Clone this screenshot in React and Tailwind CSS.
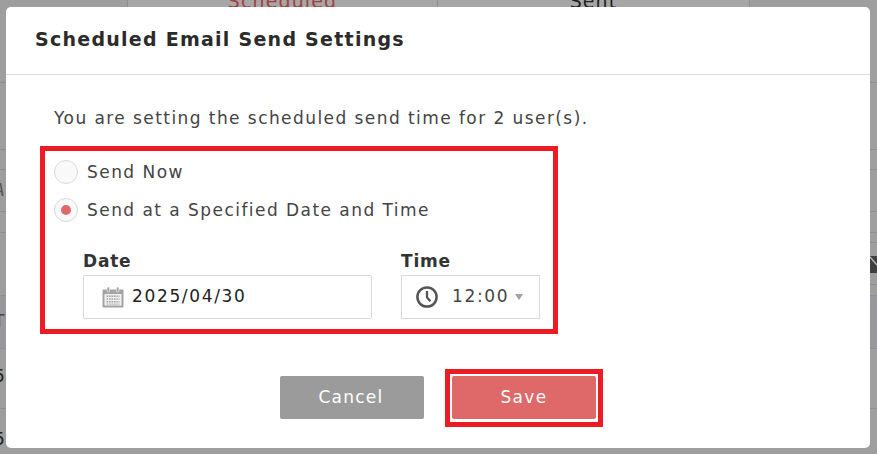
import React from "react";

function CalendarIcon() {
  return (
    <svg width="22" height="22" viewBox="0 0 22 22" className="shrink-0">
      <path d="M0.5 4.5a1 1 0 0 1 1-1h19a1 1 0 0 1 1 1v16a1 1 0 0 1-1 1h-19a1 1 0 0 1-1-1z" fill="#a3a3a3" />
      <rect x="2.5" y="8" width="17" height="11.5" fill="#f2f2f2" />
      <rect x="5" y="1" width="2.6" height="5" rx="1.2" fill="#a3a3a3" stroke="#fff" strokeWidth="0.6" />
      <rect x="14.4" y="1" width="2.6" height="5" rx="1.2" fill="#a3a3a3" stroke="#fff" strokeWidth="0.6" />
      <path d="M4.5 9.5h13v1.6h-13zM4.5 12.2h13v1.6h-13zM4.5 14.9h13v1.6h-13zM4.5 17.4h13v1.2h-13z" fill="#a3a3a3" />
      <path d="M6.5 9.5v9M9 9.5v9M11.5 9.5v9M14 9.5v9M16.3 9.5v9" stroke="#f2f2f2" strokeWidth="0.8" />
    </svg>
  );
}

function ClockIcon() {
  return (
    <svg width="22" height="22" viewBox="0 0 22 22" className="shrink-0">
      <circle cx="11" cy="11" r="9.6" fill="none" stroke="#555" strokeWidth="2.5" />
      <path d="M11 5v6.4l3.4 3.8" fill="none" stroke="#555" strokeWidth="2.3" />
    </svg>
  );
}

function Radio({ checked, label }) {
  return (
    <label className="flex items-center h-[24px] gap-[9px]">
      <span className="w-[24px] h-[24px] rounded-full border border-[#d9d9d9] flex items-center justify-center bg-[#f9f9f9] shrink-0">
        {checked && <span className="w-[10px] h-[10px] rounded-full bg-[#df6868]" />}
      </span>
      <span className="text-[17px] tracking-[1.45px] text-[#444] leading-[24px]">{label}</span>
    </label>
  );
}

function Row({ height, children, band }) {
  return (
    <div
      className={`relative w-full shrink-0 border-b border-[#8f8f8f] flex items-center justify-between text-[17px] text-[#333] ${band ? "bg-[#98989c]" : ""}`}
      style={{ height }}
    >
      {children}
    </div>
  );
}

export default function App() {
  return (
    <div className="relative w-[877px] h-[454px] overflow-hidden bg-[#9e9e9f] font-['DejaVu_Sans',sans-serif]">
      {/* dimmed page behind the dialog */}
      <div className="flex flex-col">
        <Row height={83}>
          <div className="flex h-full pl-[127px] items-start">
            <div className="w-[311px] h-[7px] bg-[#a6a6a6] border-x border-[#8e8e8e] flex justify-center">
              <span className="text-[19px] leading-[3px] tracking-[1.1px] text-[#a33f3f] whitespace-nowrap">Scheduled</span>
            </div>
            <div className="w-[312px] h-[7px] bg-[#a6a6a6] border-r border-[#8e8e8e] flex justify-center">
              <span className="text-[19px] leading-[3px] tracking-[1.1px] text-[#1f1f1f] whitespace-nowrap">Sent</span>
            </div>
          </div>
        </Row>
        <Row height={67} />
        <Row height={20} />
        <Row height={42}>
          <span className="-ml-[7px] text-[#555] italic">A</span>
        </Row>
        <Row height={21} />
        <Row height={63}>
          <span />
          <div className="flex flex-col self-stretch w-[7px]">
            <div className="h-[10px] border-b border-[#8f8f8f]" />
            <div className="h-[13px]" />
            <div className="h-[17px] bg-[#3f3f3f] flex items-center justify-center overflow-hidden">
              <svg width="7" height="17" viewBox="0 0 7 17"><path d="M0 1l7 8" stroke="#bbb" strokeWidth="1.4" fill="none" /></svg>
            </div>
            <div className="h-[12px] border-b border-[#8f8f8f]" />
          </div>
        </Row>
        <Row height={53} band>
          <span className="-ml-[6px] text-[#444]">T</span>
        </Row>
        <Row height={60}>
          <span className="-ml-[6px] pb-[4px] text-[#222]">5</span>
        </Row>
        <Row height={46}>
          <span className="-ml-[6px] pt-[16px] text-[#222]">5</span>
        </Row>
      </div>

      {/* dialog */}
      <div className="absolute left-[6px] top-[7px] w-[864px] h-[441px] bg-white rounded-[5px] flex flex-col">
        <div className="h-[68px] shrink-0 border-b border-[#dcdcdc] pl-[29px] pb-[3px] flex items-center">
          <h1 className="text-[19px] font-bold tracking-[1.26px] text-[#2b2b2b]">Scheduled Email Send Settings</h1>
        </div>
        <div className="pl-[48px] pt-[32px] text-[17px] leading-[22px] tracking-[1.43px] text-[#444]">
          You are setting the scheduled send time for 2 user(s).
        </div>
        <div className="ml-[34px] mt-[17px] w-[518px] h-[188px] border-[5px] border-[#ed1c24] pl-[9px] pt-[9px] flex flex-col gap-[14px]">
          <Radio label="Send Now" />
          <Radio checked label="Send at a Specified Date and Time" />
          <div className="flex gap-[29px] ml-[29px] mt-[12px]">
            <div className="flex flex-col">
              <span className="text-[17px] font-bold tracking-[0.8px] text-[#333] leading-[26px] mb-[1px]">Date</span>
              <div className="w-[289px] h-[44px] border border-[#d9d9d9] rounded-[2px] flex items-center pl-[18px] gap-[8px]">
                <CalendarIcon />
                <span className="text-[17px] tracking-[1.65px] text-[#222]">2025/04/30</span>
              </div>
            </div>
            <div className="flex flex-col">
              <span className="text-[17px] font-bold tracking-[0.8px] text-[#333] leading-[26px] mb-[1px]">Time</span>
              <div className="w-[139px] h-[44px] border border-[#d9d9d9] flex items-center pl-[14px]">
                <ClockIcon />
                <span className="ml-[14px] text-[17px] tracking-[1.65px] text-[#444]">12:00</span>
                <span className="ml-[6px] w-0 h-0 border-x-[4px] border-x-transparent border-t-[6px] border-t-[#a0a0a0]" />
              </div>
            </div>
          </div>
        </div>
        <div className="flex mt-[35px] ml-[274px] items-start">
          <button className="mt-[7px] w-[144px] h-[43px] bg-[#9b9b9b] rounded-[2px] text-white text-[17px] tracking-[1.25px] pr-[2px]">Cancel</button>
          <div className="ml-[21px] w-[158px] h-[58px] border-[5px] border-[#ed1c24] flex items-start justify-center pt-[2px]">
            <button className="w-[144px] h-[43px] bg-[#df6868] rounded-[2px] text-white text-[17px] tracking-[1.35px]">Save</button>
          </div>
        </div>
      </div>
    </div>
  );
}
